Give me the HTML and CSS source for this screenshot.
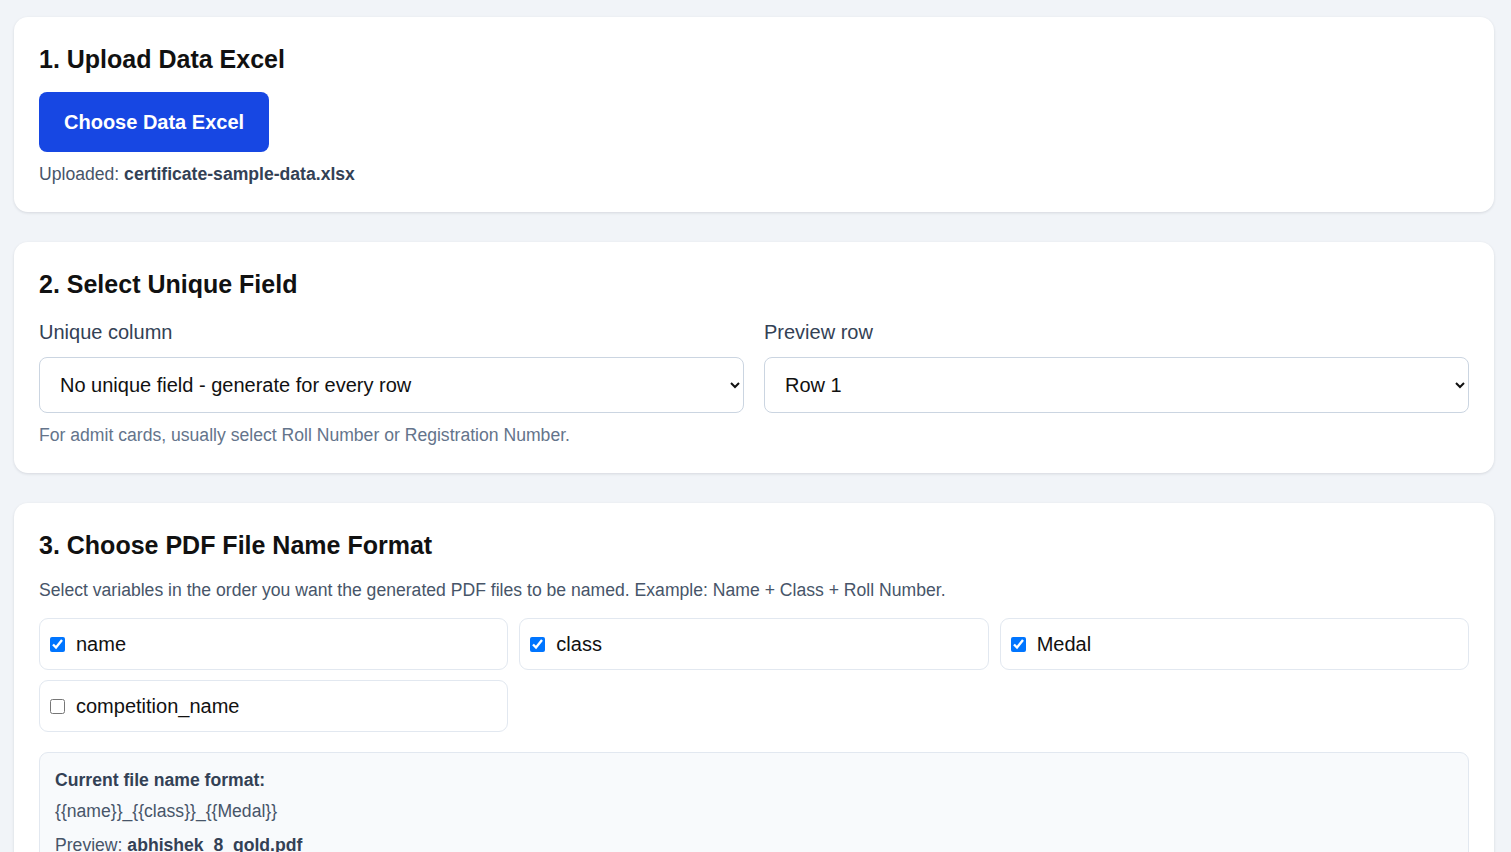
FILE: index.html
```html
<!DOCTYPE html>
<html lang="en">
<head>
  <meta charset="UTF-8">
  <meta name="viewport" content="width=device-width, initial-scale=1.0">
  <title>Certificate Generator</title>
  <link rel="stylesheet" href="styles.css">
</head>
<body>
  <div class="page">

    <div class="card">
      <h2>1. Upload Data Excel</h2>
      <button class="btn-primary">Choose Data Excel</button>
      <p class="upload-info">Uploaded: <strong>certificate-sample-data.xlsx</strong></p>
    </div>

    <div class="card">
      <h2>2. Select Unique Field</h2>
      <div class="field-row">
        <div class="field">
          <label for="uniqueCol">Unique column</label>
          <select id="uniqueCol">
            <option>No unique field - generate for every row</option>
            <option>name</option>
            <option>class</option>
          </select>
        </div>
        <div class="field">
          <label for="previewRow">Preview row</label>
          <select id="previewRow">
            <option>Row 1</option>
            <option>Row 2</option>
          </select>
        </div>
      </div>
      <p class="hint">For admit cards, usually select Roll Number or Registration Number.</p>
    </div>

    <div class="card">
      <h2>3. Choose PDF File Name Format</h2>
      <p class="desc">Select variables in the order you want the generated PDF files to be named. Example: Name + Class + Roll Number.</p>
      <div class="var-grid">
        <label class="var-item"><input type="checkbox" checked> <span>name</span></label>
        <label class="var-item"><input type="checkbox" checked> <span>class</span></label>
        <label class="var-item"><input type="checkbox" checked> <span>Medal</span></label>
        <label class="var-item"><input type="checkbox"> <span>competition_name</span></label>
      </div>
      <div class="format-box">
        <p class="format-title">Current file name format:</p>
        <p class="format-code">{{name}}_{{class}}_{{Medal}}</p>
        <p class="format-preview">Preview: <strong>abhishek_8_gold.pdf</strong></p>
      </div>
    </div>

  </div>
</body>
</html>
```

FILE: styles.css
```css
/* === GENERAL === */
body {
  margin: 0;
  padding: 0;
  font-family: 'Liberation Sans', Arial, sans-serif;
  background-color: #f1f4f8;
  color: #111;
}
.page {
  padding: 17px 17px 40px 14px;
}
.card {
  background-color: #fff;
  border-radius: 14px;
  box-shadow: 0 1px 3px rgba(15, 23, 42, 0.12);
  padding: 25px 25px 27px 25px;
  margin-bottom: 30px;
}
h2 {
  font-size: 25px;
  font-weight: 700;
  margin: 3px 0 18px 0;
  color: #111;
}
p {
  margin: 0;
}

/* === UPLOAD === */
.btn-primary {
  background-color: #1747e3;
  color: #fff;
  border: none;
  border-radius: 8px;
  font-family: 'Liberation Sans', Arial, sans-serif;
  font-size: 20px;
  font-weight: 700;
  padding: 0 25px;
  height: 60px;
  cursor: pointer;
}
.upload-info {
  margin-top: 12px;
  font-size: 17.6px;
  color: #475569;
}
.upload-info strong {
  color: #334155;
}

/* === UNIQUE FIELD === */
.field-row {
  display: grid;
  grid-template-columns: 1fr 1fr;
  gap: 20px;
  padding-top: 4px;
}
.field {
  display: flex;
  flex-direction: column;
  gap: 13px;
}
.field label {
  font-size: 20px;
  color: #334155;
}
.field select {
  height: 56px;
  border: 1px solid #cbd5e1;
  border-radius: 8px;
  background-color: #fff;
  font-family: 'Liberation Sans', Arial, sans-serif;
  font-size: 20px;
  color: #111;
  padding: 0 16px;
}
.hint {
  margin-top: 12px;
  font-size: 17.6px;
  color: #64748b;
}

/* === FILE NAME FORMAT === */
.desc {
  font-size: 17.6px;
  color: #475569;
  padding-top: 2px;
  margin-bottom: 17px;
}
.var-grid {
  display: grid;
  grid-template-columns: repeat(3, 1fr);
  gap: 10px 11px;
}
.var-item {
  display: flex;
  align-items: center;
  gap: 11px;
  height: 50px;
  padding: 0 10px;
  border: 1px solid #e2e8f0;
  border-radius: 9px;
  font-size: 20px;
  color: #111;
  cursor: pointer;
}
.var-item input {
  margin: 0;
  width: 15px;
  height: 15px;
}
.format-box {
  margin-top: 20px;
  background-color: #f8fafc;
  border: 1px solid #e2e8f0;
  border-radius: 9px;
  padding: 17px 15px;
  display: flex;
  flex-direction: column;
  gap: 10px;
}
.format-title {
  font-size: 17.6px;
  font-weight: 700;
  color: #334155;
}
.format-code {
  font-size: 17.6px;
  color: #475569;
}
.format-preview {
  margin-top: 3px;
  font-size: 17.6px;
  color: #475569;
}
.format-preview strong {
  color: #334155;
}
```
